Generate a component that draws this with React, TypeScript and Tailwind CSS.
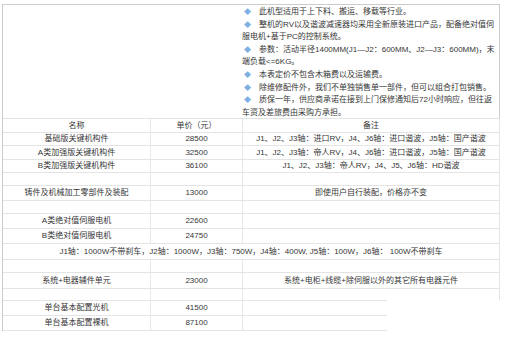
const font = {
  fontFamily: '"Liberation Sans", "Noto Sans CJK SC", sans-serif',
};

const notes: { text: string; bullet: boolean }[] = [
  { text: "此机型适用于上下料、搬运、移载等行业。", bullet: true },
  { text: "整机的RV以及谐波减速器均采用全新原装进口产品，配备绝对值伺", bullet: true },
  { text: "服电机+基于PC的控制系统。", bullet: false },
  { text: "参数：活动半径1400MM(J1—J2：600MM、J2—J3：600MM)，末", bullet: true },
  { text: "端负载<=6KG。", bullet: false },
  { text: "本表定价不包含木箱费以及运输费。", bullet: true },
  { text: "除维修配件外，我们不单独销售单一部件，但可以组合打包销售。", bullet: true },
  { text: "质保一年，供应商承诺在接到上门保修通知后72小时响应，但往返", bullet: true },
  { text: "车资及差旅费由采购方承担。", bullet: false },
];

type RowProps = {
  h: string;
  name?: string;
  price?: string;
  note?: string;
  open?: boolean;
};

function Row({ h, name, price, note, open }: RowProps) {
  return (
    <div
      className={`flex border-t border-[#e4e4e4] ${h} ${
        open ? "w-[384px]" : "border-r border-r-[#e4e4e4]"
      }`}
    >
      <div className="w-[148px] shrink-0 border-r border-[#e8e8e8] flex items-center justify-center whitespace-nowrap">
        {name}
      </div>
      <div className="w-[92px] shrink-0 border-r border-[#e8e8e8] flex items-center justify-center">
        {price}
      </div>
      <div className="flex-1 flex items-center justify-center whitespace-nowrap">{note}</div>
    </div>
  );
}

export default function App() {
  return (
    <div
      className="w-[512px] h-[339px] overflow-hidden bg-white pt-[4px] pl-[2px] text-[8px] text-[#363636]"
      style={font}
    >
      <div className="w-[498px] border-l border-[#cccccc]">
        {/* notes box */}
        <div className="flex h-[114px] border-t border-r border-[#cccccc]">
          <div className="w-[239px] shrink-0" />
          <div className="flex-1 pt-[1px] leading-[12.6px]">
            {notes.map((n, i) => (
              <div key={i} className="whitespace-nowrap">
                {n.bullet && (
                  <span className="inline-block w-[17px] pl-[2px] text-[7px] text-[#7db1e3]">◆</span>
                )}
                {n.text}
              </div>
            ))}
          </div>
        </div>

        {/* price table */}
        <Row h="h-[14px]" name="名称" price="单价（元）" note="备注" />
        <Row
          h="h-[13px]"
          name="基础版关键机构件"
          price="28500"
          note="J1、J2、J3轴：进口RV，J4、J6轴：进口谐波，J5轴：国产谐波"
        />
        <Row
          h="h-[14px]"
          name="A类加强版关键机构件"
          price="32500"
          note="J1、J2、J3轴：帝人RV，J4、J6轴：进口谐波，J5轴：国产谐波"
        />
        <Row
          h="h-[13px]"
          name="B类加强版关键机构件"
          price="36100"
          note="J1、J2、J3轴：帝人RV，J4、J5、J6轴：HD谐波"
        />
        <Row h="h-[13px]" />
        <Row
          h="h-[15px]"
          name="铸件及机械加工零部件及装配"
          price="13000"
          note="即使用户自行装配，价格亦不变"
        />
        <Row h="h-[13px]" />
        <Row h="h-[15px]" name="A类绝对值伺服电机" price="22600" />
        <Row h="h-[15px]" name="B类绝对值伺服电机" price="24750" />
        <div className="flex h-[16px] items-center justify-center whitespace-nowrap border-t border-r border-[#e4e4e4]">
          J1轴：1000W不带刹车，J2轴：1000W，J3轴：750W，J4轴：400W, J5轴：100W，J6轴： 100W不带刹车
        </div>
        <Row h="h-[13px]" />
        <Row
          h="h-[16px]"
          name="系统+电器辅件单元"
          price="23000"
          note="系统+电柜+线缆+除伺服以外的其它所有电器元件"
        />
        <Row h="h-[12px]" />
        <Row h="h-[15px]" name="单台基本配置光机" price="41500" open />
        <Row h="h-[15px]" name="单台基本配置裸机" price="87100" open />
        <div className="w-[384px] border-t border-[#e4e4e4]" />
      </div>
    </div>
  );
}
